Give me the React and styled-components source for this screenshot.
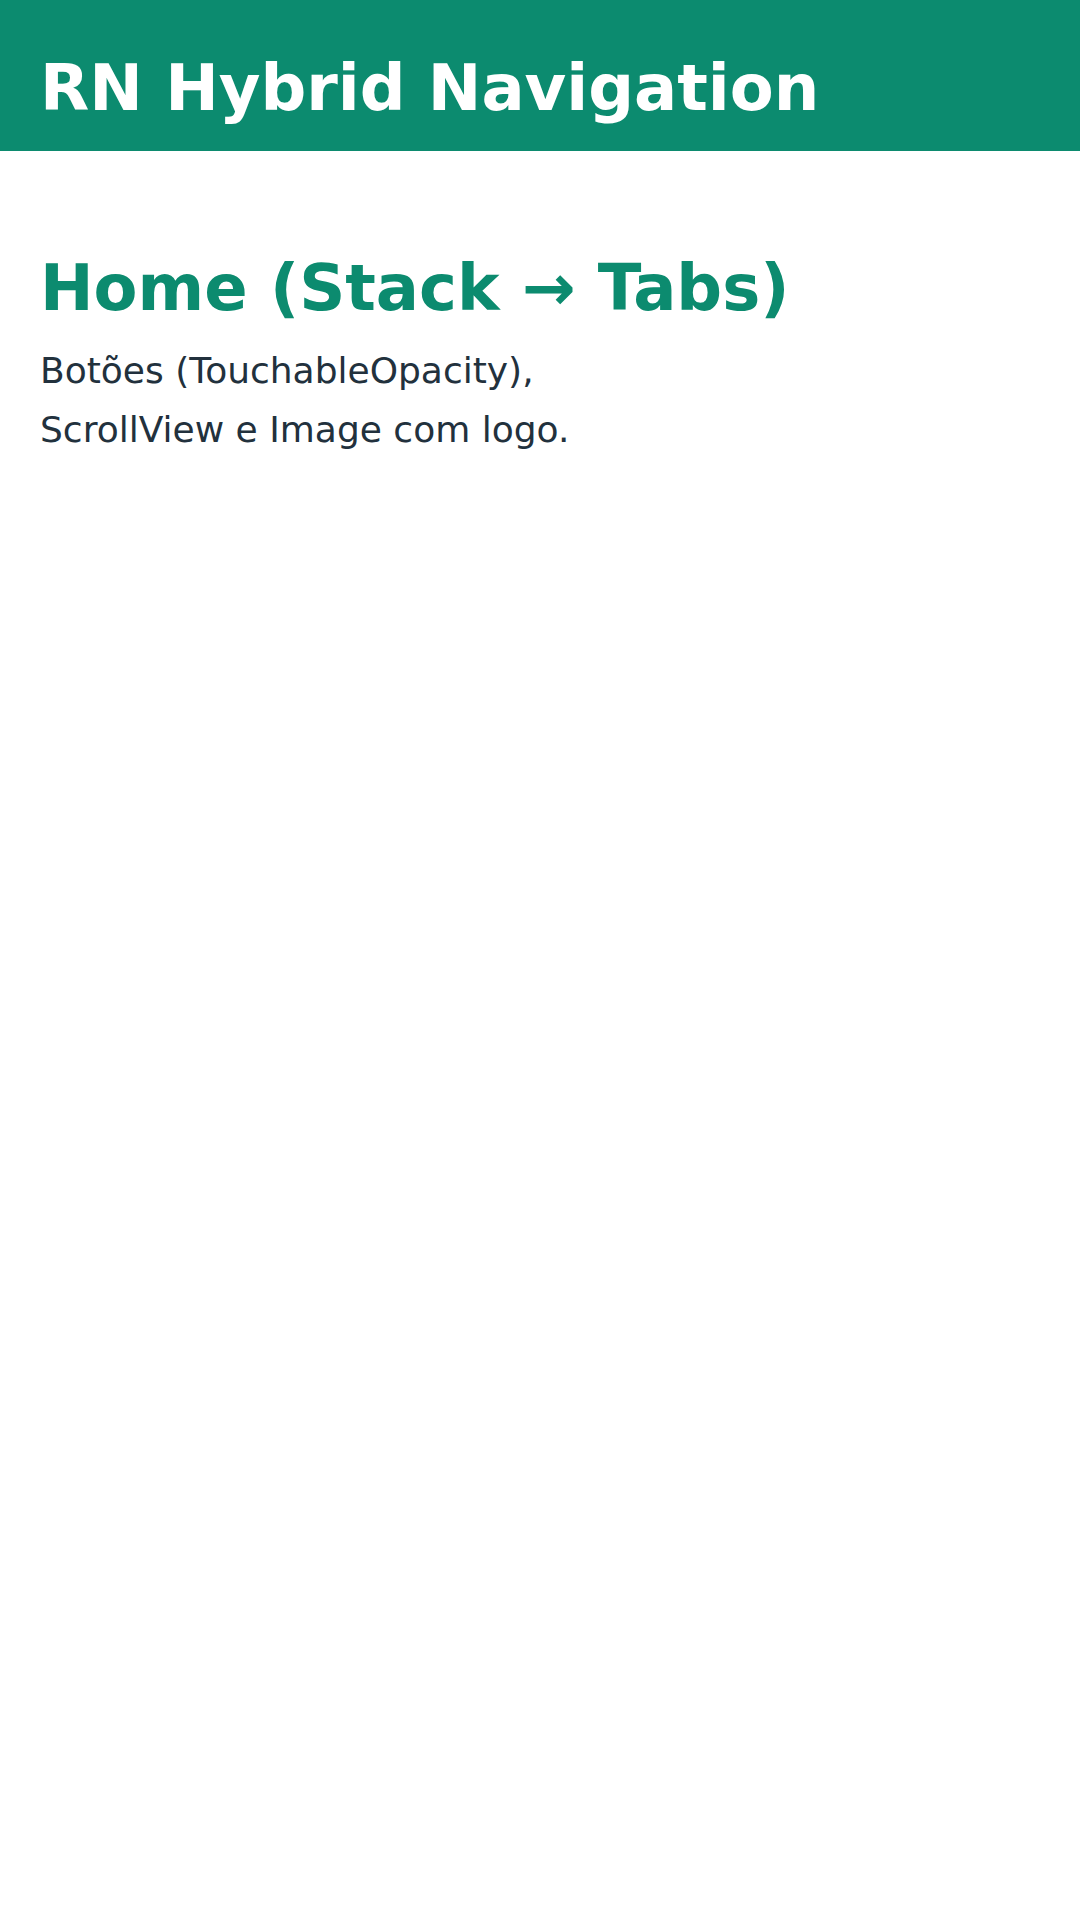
import React from "react";
import styled, { createGlobalStyle } from "styled-components";

const Global = createGlobalStyle`
  html, body {
    margin: 0;
    padding: 0;
    background: #ffffff;
    font-family: "DejaVu Sans", "Liberation Sans", sans-serif;
  }
  * { box-sizing: border-box; }
`;

const Page = styled.div`
  width: 1080px;
  min-height: 1920px;
  background: #ffffff;
  display: flex;
  flex-direction: column;
`;

const Header = styled.header`
  height: 151px;
  background: #0c8b6f;
  padding: 51px 40px 0;
`;

const HeaderTitle = styled.h1`
  margin: 0;
  color: #ffffff;
  font-size: 64px;
  line-height: 75px;
  font-weight: 700;
`;

const Content = styled.main`
  padding: 100px 40px 40px;
  display: flex;
  flex-direction: column;
  gap: 15px;
`;

const Heading = styled.h2`
  margin: 0;
  color: #0c8b6f;
  font-size: 64px;
  line-height: 75px;
  font-weight: 700;
`;

const Body = styled.p`
  margin: 0;
  max-width: 600px;
  color: #22313d;
  font-size: 36px;
  line-height: 59px;
  font-weight: 400;
`;

export default function App() {
  return (
    <Page>
      <Global />
      <Header>
        <HeaderTitle>RN Hybrid Navigation</HeaderTitle>
      </Header>
      <Content>
        <Heading>Home (Stack → Tabs)</Heading>
        <Body>Botões (TouchableOpacity), ScrollView e Image com logo.</Body>
      </Content>
    </Page>
  );
}
